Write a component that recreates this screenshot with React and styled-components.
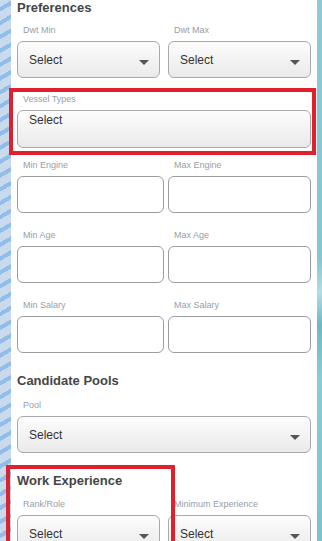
import React from "react"
import styled, { createGlobalStyle } from "styled-components"

const GlobalStyle = createGlobalStyle`
  html, body {
    margin: 0;
    padding: 0;
    width: 322px;
    height: 541px;
    overflow: hidden;
  }
  body {
    font-family: "Liberation Sans", Arial, sans-serif;
  }
`

const Page = styled.div`
  display: flex;
  width: 322px;
  height: 541px;
  overflow: hidden;
`

const LeftStripe = styled.div`
  width: 11px;
  flex-shrink: 0;
  background: repeating-linear-gradient(
    -30deg,
    #c8daec 0px,
    #c8daec 8px,
    #92bdea 8px,
    #92bdea 12px
  );
`

const RightStrip = styled.div`
  width: 5px;
  flex-shrink: 0;
  background: linear-gradient(
    to bottom,
    #8dcad6 0%,
    #86c5d2 48%,
    #b4dde4 54%,
    #6fb7c6 60%,
    #8ccbd5 70%,
    #7ec1cf 100%
  );
`

const Panel = styled.div`
  flex: 1;
  background: #fff;
  padding: 0 6px;
  display: flex;
  flex-direction: column;
`

const Heading = styled.h3`
  margin: ${p => p.$mt || 0}px 0 0;
  font-size: 13px;
  line-height: 15px;
  font-weight: bold;
  color: #454545;
`

const Row = styled.div`
  display: grid;
  grid-template-columns: ${p => (p.$single ? "1fr" : "1fr 1fr")};
  margin-top: ${p => p.$mt || 0}px;
`

const Field = styled.div`
  display: flex;
  flex-direction: column;
  padding-left: ${p => p.$pl || 0}px;
  padding-right: ${p => p.$pr || 0}px;
`

const Label = styled.label`
  font-size: 9px;
  line-height: 11px;
  color: #96a0aa;
  margin-bottom: 5px;
  padding-left: 6px;
  white-space: nowrap;
`

const SelectBox = styled.div`
  position: relative;
  box-sizing: border-box;
  height: ${p => p.$h || 37}px;
  border: 1px solid #a9a9a9;
  border-radius: 6px;
  background: linear-gradient(to bottom, #fdfdfd 0%, #f3f3f3 50%, #eaeaea 100%);
  display: flex;
  align-items: ${p => (p.$top ? "flex-start" : "center")};
  padding: ${p => (p.$top ? "2px 11px 0" : "0 11px")};
  font-size: 12px;
  color: #333;
`

const Arrow = styled.span`
  position: absolute;
  right: 10px;
  top: 50%;
  width: 0;
  height: 0;
  border-left: 5px solid transparent;
  border-right: 5px solid transparent;
  border-top: 5px solid #555;
`

const Input = styled.div`
  box-sizing: border-box;
  height: 37px;
  border: 1px solid #9c9c9c;
  border-radius: 6px;
  background: #fff;
`

const Highlight = styled.div`
  position: absolute;
  border: 4px solid #e0202c;
  pointer-events: none;
  top: ${p => p.$top}px;
  left: ${p => p.$left}px;
  right: ${p => (p.$right !== undefined ? `${p.$right}px` : "auto")};
  bottom: ${p => p.$bottom}px;
  width: ${p => (p.$width ? `${p.$width}px` : "auto")};
`

const Section = styled.div`
  position: relative;
  display: flex;
  flex-direction: column;
  margin-top: ${p => p.$mt || 0}px;
`

const Select = ({ h, top, arrow = true }) => (
  <SelectBox $h={h} $top={top}>
    Select
    {arrow && <Arrow />}
  </SelectBox>
)

const SelectField = ({ label, pl, pr, ...rest }) => (
  <Field $pl={pl} $pr={pr}>
    <Label>{label}</Label>
    <Select {...rest} />
  </Field>
)

const InputField = ({ label, pl }) => (
  <Field $pl={pl}>
    <Label>{label}</Label>
    <Input />
  </Field>
)

export default function App() {
  return (
    <>
      <GlobalStyle />
      <Page>
        <LeftStripe />
        <Panel>
          <Heading>Preferences</Heading>
          <Row $mt={10}>
            <SelectField label="Dwt Min" pr={4} />
            <SelectField label="Dwt Max" pl={4} />
          </Row>

          <Section $mt={16}>
            <Field>
              <Label>Vessel Types</Label>
              <Select h={38} top arrow={false} />
            </Field>
            <Highlight $top={-6} $left={-8} $right={-5} $bottom={-7} />
          </Section>

          <Row $mt={12}>
            <InputField label="Min Engine" />
            <InputField label="Max Engine" pl={4} />
          </Row>
          <Row $mt={17}>
            <InputField label="Min Age" />
            <InputField label="Max Age" pl={4} />
          </Row>
          <Row $mt={17}>
            <InputField label="Min Salary" />
            <InputField label="Max Salary" pl={4} />
          </Row>

          <Heading $mt={20}>Candidate Pools</Heading>
          <Row $single $mt={12}>
            <SelectField label="Pool" />
          </Row>

          <Section $mt={20}>
            <Heading>Work Experience</Heading>
            <Row $mt={11}>
              <SelectField label="Rank/Role" pr={4} />
              <SelectField label="Minimum Experience" pl={4} />
            </Row>
            <Highlight $top={-8} $left={-11} $width={161} $bottom={-20} />
          </Section>
        </Panel>
        <RightStrip />
      </Page>
    </>
  )
}
